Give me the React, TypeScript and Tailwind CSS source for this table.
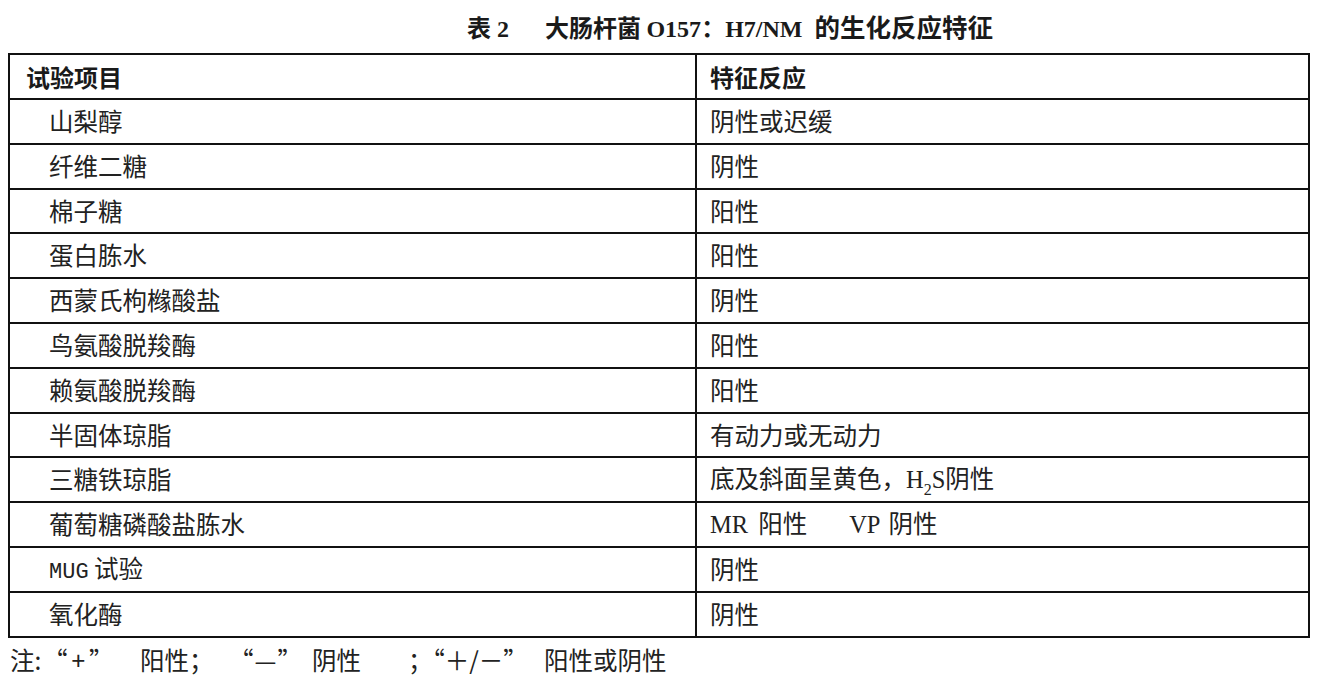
import React from 'react';

const cjk = { fontFamily: '"Noto Sans CJK SC", "Liberation Serif", serif' };
const serif = { fontFamily: '"Liberation Serif", "Noto Sans CJK SC", serif' };

const rows: { item: React.ReactNode; result: React.ReactNode }[] = [
  { item: '山梨醇', result: '阴性或迟缓' },
  { item: '纤维二糖', result: '阴性' },
  { item: '棉子糖', result: '阳性' },
  { item: '蛋白胨水', result: '阳性' },
  { item: '西蒙氏枸橼酸盐', result: '阴性' },
  { item: '鸟氨酸脱羧酶', result: '阳性' },
  { item: '赖氨酸脱羧酶', result: '阳性' },
  { item: '半固体琼脂', result: '有动力或无动力' },
  {
    item: '三糖铁琼脂',
    result: (
      <>
        底及斜面呈黄色，
        <span style={serif}>
          H<sub className="text-[16px] align-[-3px]">2</sub>S
        </span>
        阴性
      </>
    ),
  },
  {
    item: '葡萄糖磷酸盐胨水',
    result: (
      <>
        <span style={serif}>MR</span>
        <span className="ml-[10px]">阳性</span>
        <span style={serif} className="ml-[42px]">VP</span>
        <span className="ml-[8px]">阴性</span>
      </>
    ),
  },
  {
    item: (
      <>
        <span className="font-['Liberation_Mono'] text-[22px]">MUG</span> 试验
      </>
    ),
    result: '阴性',
  },
  { item: '氧化酶', result: '阴性' },
];

// footnote pieces: [text, box classes]
const note: [string, string][] = [
  ['注:', 'w-[33px]'],
  ['“+”', 'w-[97px] tracking-[4px]'],
  ['阳性；', 'w-[89px]'],
  ['“—”', 'w-[83px] tracking-[1px]'],
  ['阴性', 'w-[96px]'],
  ['；“＋/－”', 'w-[136px]'],
  ['阳性或阴性', ''],
];

export default function App() {
  return (
    <div className="w-[1318px] h-[686px] bg-white text-[#1a1a1a] overflow-hidden" style={cjk}>
      <div className="h-[53px] flex items-center pl-[467px] pt-[1px]">
        <h1 className="font-bold text-[24px] whitespace-pre" style={serif}>
          <span style={cjk}>表</span> 2
          <span className="ml-[36px]" style={cjk}>大肠杆菌 </span>O157
          <span style={cjk}>：</span>H7/NM
          <span style={cjk} className="text-[25.5px] ml-[12px]">的生化反应特征</span>
        </h1>
      </div>

      <table className="ml-[8px] w-[1302px] border-collapse border-2 border-[#111] table-fixed">
        <colgroup>
          <col className="w-[687px]" />
          <col />
        </colgroup>
        <thead>
          <tr className="h-[45px]">
            <th className="border-2 border-[#111] text-left font-bold text-[24px] pl-[16px] py-0">试验项目</th>
            <th className="border-2 border-[#111] text-left font-bold text-[24px] pl-[13px] py-0">特征反应</th>
          </tr>
        </thead>
        <tbody>
          {rows.map((r, i) => (
            <tr key={i} className="h-[44.8px]">
              <td className="border-2 border-[#111] text-[24.5px] pl-[39px] py-0 font-normal text-[#222]">{r.item}</td>
              <td className="border-2 border-[#111] text-[24.5px] pl-[13px] py-0 text-[#222]">{r.result}</td>
            </tr>
          ))}
        </tbody>
      </table>

      <div className="pl-[10px] pt-[4px] text-[24.5px] text-[#222] whitespace-nowrap flex">
        {note.map(([t, w], i) => (
          <span key={i} className={`inline-block shrink-0 ${w}`}>
            {t}
          </span>
        ))}
      </div>
    </div>
  );
}
